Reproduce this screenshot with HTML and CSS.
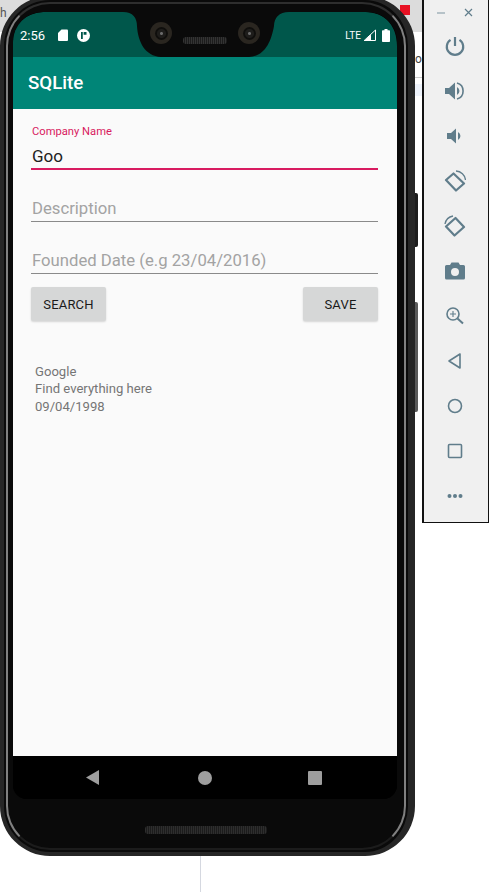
FILE: index.html
```html
<!DOCTYPE html>
<html lang="en">
<head>
<meta charset="utf-8">
<title>SQLite</title>
<link rel="stylesheet" href="styles.css">
</head>
<body>
<div class="desktop">
  <div class="backdrop">
    <div class="bd-top"></div>
    <div class="bd-red"></div>
    <span class="bd-h">h</span>
    <span class="bd-o">o</span>
    <div class="bd-line"></div>
    <div class="bd-row"></div>
  </div>
  <div class="bd-vline"></div>

  <div class="hw-btn hw-power"></div>
  <div class="hw-btn hw-vol"></div>
  <div class="phone">
    <div class="rim">
      <div class="glass">
        <div class="screen">
          <header class="statusbar">
            <svg class="status-bg" width="384" height="45" viewBox="0 0 384 45"><path fill="#00574b" d="M0 45V30C0 10 14 0 34 0H110C120 0 124 6 124 14C125 30 132 44 148 45H236C252 44 258 30 261 14C261 6 266 0 276 0H352C372 0 384 14 384 34V45Z"/></svg>
            <div class="status-left">
              <span class="time">2:56</span>
              <svg class="st-sd" width="10" height="12" viewBox="0 0 10 12"><path fill="#fff" d="M3.5 0.5H9a1 1 0 0 1 1 1V11a1 1 0 0 1-1 1H1a1 1 0 0 1-1-1V4Z"/></svg>
              <svg class="st-circle" width="13" height="13" viewBox="0 0 13 13"><circle cx="6.5" cy="6.5" r="6.5" fill="#fff"/><path fill="#00574b" d="M4 3h1.8v7H4ZM6.6 3H9.5V5.8H6.6Z"/></svg>
            </div>
            <div class="status-right">
              <span class="lte">LTE</span>
              <svg class="st-signal" width="13" height="12" viewBox="0 0 13 12"><path fill="none" stroke="#fff" stroke-width="1" d="M12.5 1V11.5H1.2Z"/><path fill="#fff" d="M8 5.5V12H1Z"/></svg>
              <svg class="st-batt" width="8" height="13" viewBox="0 0 8 13"><path fill="#fff" d="M2.5 0H5.5V1.2H7.2A.8.8 0 0 1 8 2V12.2A.8.8 0 0 1 7.2 13H.8A.8.8 0 0 1 0 12.2V2A.8.8 0 0 1 .8 1.2H2.5Z"/></svg>
            </div>
            <div class="cam cam-l"><div class="lens"></div></div>
            <div class="speaker"></div>
            <div class="cam cam-r"><div class="lens"></div></div>
          </header>
          <div class="toolbar">SQLite</div>
          <main class="content">
            <div class="field field-active">
              <label class="float-label">Company Name</label>
              <div class="value">Goo</div>
            </div>
            <div class="field"><div class="hint">Description</div></div>
            <div class="field"><div class="hint">Founded Date (e.g 23/04/2016)</div></div>
            <div class="actions">
              <button class="btn">SEARCH</button>
              <button class="btn">SAVE</button>
            </div>
            <div class="result">
              <div>Google</div>
              <div>Find everything here</div>
              <div>09/04/1998</div>
            </div>
          </main>
          <nav class="navbar">
            <svg width="13" height="15" viewBox="0 0 13 15"><path fill="#9e9e9e" d="M13 0V15L0 7.5Z"/></svg>
            <svg class="nav-home" width="14" height="14" viewBox="0 0 14 14"><circle cx="7" cy="7" r="7" fill="#9e9e9e"/></svg>
            <svg width="14" height="14" viewBox="0 0 14 14"><rect width="14" height="14" rx="1" fill="#9e9e9e"/></svg>
          </nav>
        </div>
        <div class="chin"><div class="chin-speaker"></div></div>
      </div>
    </div>
  </div>

  <aside class="sidebar">
    <div class="win-btns">
      <svg width="8" height="8" viewBox="0 0 8 8"><path stroke="#90a4ae" stroke-width="1.2" d="M0 4H8"/></svg>
      <svg width="9" height="9" viewBox="0 0 9 9"><path stroke="#607d8b" stroke-width="1.2" d="M1 1L8 8M8 1L1 8"/></svg>
    </div>
    <div class="tools">
      <svg class="tool" viewBox="0 0 22 22"><path fill="none" stroke="#607d8b" stroke-width="2.2" d="M11 2V11M6.5 4.8A8.2 8.2 0 1 0 15.5 4.8"/></svg>
      <svg class="tool" viewBox="0 0 22 22"><path fill="#607d8b" d="M1 8H5L11 2.5V19.5L5 14H1Z"/><path fill="#607d8b" d="M13 7A4.5 4.5 0 0 1 13 15Z"/><path fill="none" stroke="#607d8b" stroke-width="1.6" d="M13 3A8.3 8.3 0 0 1 13 19"/></svg>
      <svg class="tool" viewBox="0 0 22 22"><path fill="#607d8b" d="M3 8H7L12 3.5V18.5L7 14H3Z"/><path fill="#607d8b" d="M14 7A4.5 4.5 0 0 1 14 15Z"/></svg>
      <svg class="tool" viewBox="0 0 22 22"><path fill="none" stroke="#607d8b" stroke-width="2.2" stroke-linejoin="round" d="M2 10L9.5 3.5L20 13.5L12 20.5Z"/><path fill="none" stroke="#607d8b" stroke-width="1.3" d="M12 1A10 10 0 0 1 21.5 10"/></svg>
      <svg class="tool" viewBox="0 0 22 22"><path fill="none" stroke="#607d8b" stroke-width="2.2" stroke-linejoin="round" d="M2 11.5L11.5 3L20 12L10.5 20.5Z"/><path fill="none" stroke="#607d8b" stroke-width="1.3" d="M1 9A10 10 0 0 1 9 1"/></svg>
      <svg class="tool" viewBox="0 0 22 22"><path fill="#607d8b" fill-rule="evenodd" d="M7.5 2.5H14.5L16 5H19.5A1.5 1.5 0 0 1 21 6.5V18A1.5 1.5 0 0 1 19.5 19.5H2.5A1.5 1.5 0 0 1 1 18V6.5A1.5 1.5 0 0 1 2.5 5H6ZM11 8A4 4 0 1 0 11 16A4 4 0 0 0 11 8Z"/></svg>
      <svg class="tool" viewBox="0 0 22 22"><circle cx="9" cy="9" r="6" fill="none" stroke="#607d8b" stroke-width="1.6"/><path stroke="#607d8b" stroke-width="2" d="M13.5 13.5L19 18.5"/><path stroke="#607d8b" stroke-width="1.1" d="M9 6V12M6 9H12"/></svg>
      <svg class="tool" viewBox="0 0 22 22"><path fill="none" stroke="#607d8b" stroke-width="1.6" stroke-linejoin="round" d="M16 4V18L5 11Z"/></svg>
      <svg class="tool" viewBox="0 0 22 22"><circle cx="11" cy="11" r="6.5" fill="none" stroke="#607d8b" stroke-width="1.6"/></svg>
      <svg class="tool" viewBox="0 0 22 22"><rect x="4.5" y="4.5" width="13" height="13" rx="1" fill="none" stroke="#607d8b" stroke-width="1.6"/></svg>
      <svg class="tool" viewBox="0 0 22 22"><circle cx="5.5" cy="11" r="2" fill="#607d8b"/><circle cx="11" cy="11" r="2" fill="#607d8b"/><circle cx="16.5" cy="11" r="2" fill="#607d8b"/></svg>
    </div>
  </aside>
</div>
</body>
</html>
```

FILE: styles.css
```css
* { box-sizing: border-box; }
html, body { margin: 0; padding: 0; background: #fff; }
body { font-family: Roboto, "Noto Sans", sans-serif; overflow: hidden; }

.desktop { position: relative; width: 489px; height: 892px; overflow: hidden; background: #fff; }

/* desktop behind the emulator */
.backdrop { position: absolute; inset: 0; }
.bd-top { position: absolute; left: 0; top: 0; width: 422px; height: 32px; background: #dcdcdc; }
.bd-red { position: absolute; left: 400px; top: 5px; width: 10px; height: 10px; background: #e81123; }
.bd-h { position: absolute; left: 0; top: 6px; font-size: 12px; color: #555; }
.bd-o { position: absolute; left: 415px; top: 52px; font-size: 12px; color: #444; }
.bd-line { position: absolute; left: 410px; top: 77px; width: 12px; height: 1px; background: #ccc; }
.bd-row { position: absolute; left: 410px; top: 84px; width: 12px; height: 12px; background: #eef3fb; }
.bd-vline { position: absolute; left: 200px; top: 850px; width: 1px; height: 42px; background: #d5d8e0; }

/* hardware */
.hw-btn { position: absolute; left: 412px; width: 6px; border-radius: 0 2px 2px 0; }
.hw-vol { top: 193px; height: 54px; background: #1c1c1c; }
.hw-power { top: 302px; height: 110px; background: #5a5a5a; }

.phone {
  position: absolute; left: 0; top: -4px;
  width: 415px; height: 860px;
  border: 4px solid #262626;
  border-right-width: 7px;
  border-radius: 50px;
  background: #0a0a0a;
}
.rim {
  height: calc(100% - 4px);
  margin: 2px;
  padding: 8px 7px 0 5px;
  border: 2px solid;
  border-color: #2e2e2e #808080 #1c1c1c #808080;
  border-radius: 44px;
  background: #0a0a0a;
}
.glass { display: flex; flex-direction: column; height: 100%; }

.screen {
  display: flex; flex-direction: column; flex: none;
  width: 384px; height: 787px;
  background: #000;
  border-radius: 30px 30px 14px 14px;
  overflow: hidden;
}

.statusbar {
  position: relative; flex: none;
  display: flex; justify-content: space-between; align-items: center;
  height: 45px; padding: 1px 7px 0; background: #0a0a0a;
}
.status-bg { position: absolute; left: 0; top: 0; }
.status-left, .status-right { position: relative; display: flex; align-items: center; }
.time { font-size: 13px; color: #fff; width: 38px; }
.st-sd { margin-right: 9px; }
.lte { font-size: 10px; color: #fff; margin-right: 2px; }
.st-signal { margin-right: 6px; }

.cam { position: absolute; top: 10px; width: 22px; height: 22px; border-radius: 50%; background: #2a2620; display: flex; align-items: center; justify-content: center; }
.cam-l { left: 137px; }
.cam-r { left: 225px; }
.lens { width: 13px; height: 13px; border-radius: 50%; background: radial-gradient(circle, #6a6a6a 0 1px, #1e1d1b 2px 4px, #0f0e0c 5px); }
.speaker {
  position: absolute; left: 170px; top: 25px; width: 44px; height: 7px; border-radius: 3px;
  background: repeating-linear-gradient(90deg, #333 0 1px, #1c1c1c 1px 2px);
}

.toolbar {
  flex: none; height: 52px; padding-left: 15px;
  display: flex; align-items: center;
  background: #008577; color: #fff;
  font-size: 18.7px; font-weight: 500;
}

.content {
  flex: 1; display: flex; flex-direction: column;
  padding: 0 19px 0 18px;
  background: #fafafa;
}
.field { height: 52px; border-bottom: 1px solid #8a8a8a; padding-left: 1px; display: flex; flex-direction: column; justify-content: flex-end; }
.field-active { height: 61px; border-bottom: 2px solid #d81b60; }
.float-label { font-size: 11.2px; line-height: 13px; color: #d81b60; margin-bottom: 7px; }
.value { font-size: 17px; line-height: 22px; color: #212121; margin-bottom: 1px; }
.hint { font-size: 16.7px; line-height: 22px; color: #a3a3a3; margin-bottom: 1px; }

.actions { display: flex; justify-content: space-between; margin-top: 13px; }
.btn {
  width: 75px; height: 34px; padding: 0;
  border: 0; border-radius: 2px;
  background: #d6d7d7; color: #1a1a1a;
  font-family: inherit; font-size: 13px; font-weight: 400; letter-spacing: .2px;
  box-shadow: 0 1px 2px rgba(0,0,0,.15);
}
.result { margin-top: 41.5px; padding-left: 4px; font-size: 13.1px; line-height: 17.6px; color: #757575; }

.navbar {
  flex: none; height: 43px; padding-left: 73px;
  display: flex; align-items: center;
  background: #000;
}
.nav-home { margin: 0 96px 0 99px; }
.chin { flex: 1; position: relative; }
.chin-speaker {
  position: absolute; left: 132px; top: 27px; width: 122px; height: 8px; border-radius: 3px;
  background: repeating-linear-gradient(90deg, #2e2e2e 0 1px, #1c1c1c 1px 2px);
}

/* emulator side toolbar */
.sidebar {
  position: absolute; left: 422px; top: 0;
  width: 67px; height: 523px;
  background: #f0f0f0;
  border: 1px solid #111; border-top: 0;
  border-left-width: 2px;
}
.win-btns { display: flex; justify-content: space-between; align-items: center; padding: 7px 15px 0 13px; height: 18px; }
.tools { display: flex; flex-direction: column; align-items: center; gap: 23px; margin-top: 17px; margin-right: 2px; }
.tool { display: block; width: 22px; height: 22px; flex: none; }
```
